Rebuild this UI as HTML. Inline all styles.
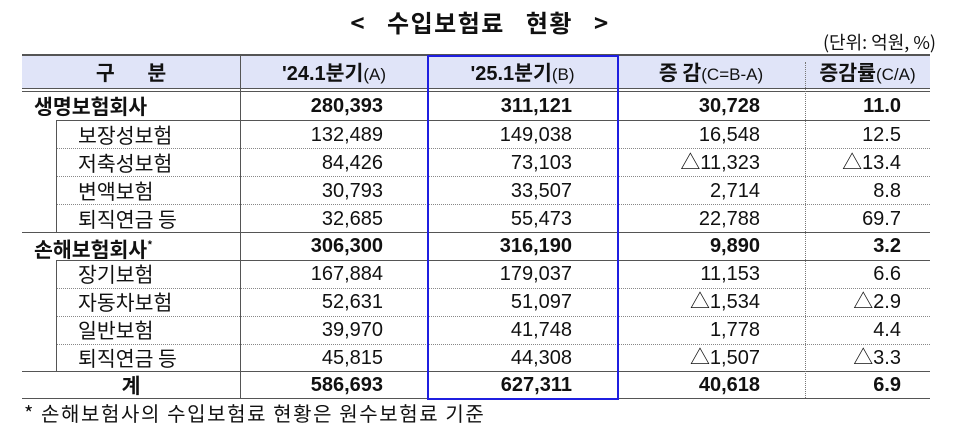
<!DOCTYPE html><html><head><meta charset="utf-8"><style>
body{margin:0;width:960px;height:437px;background:#fff;position:relative;overflow:hidden;font-family:"Liberation Sans","Noto Sans CJK KR",sans-serif;color:#111}
.a{position:absolute}
.t{position:absolute;font-size:20px;line-height:28px;white-space:nowrap}
.k{font-family:"Noto Sans CJK KR",sans-serif;font-size:20.5px;line-height:28px}
.b{font-weight:bold}
.r{text-align:right}
.h{position:absolute;height:0}
.v{position:absolute;width:0}
small{font-size:17px;font-weight:normal;font-family:"Liberation Sans",sans-serif}
</style></head><body>
<div class="a b" style="left:0;width:960px;top:5px;text-align:center;font-size:24px;line-height:34px;letter-spacing:1.5px;word-spacing:14px;font-family:'Noto Sans CJK KR',sans-serif">&lt; 수입보험료 현황 &gt;</div>
<div class="a" style="right:24px;top:29px;font-size:18px;line-height:26px;font-family:'Noto Sans CJK KR',sans-serif">(단위: 억원, %)</div>
<div class="a" style="left:22px;top:56px;width:908px;height:33px;background:#e0e4f8"></div>
<div class="h" style="left:22px;top:54px;width:908px;border-top:2px solid #555"></div>
<div class="h" style="left:22px;top:88px;width:908px;border-top:1px solid #555"></div>
<div class="h" style="left:22px;top:91px;width:908px;border-top:1px solid #555"></div>
<div class="h" style="left:56px;top:120px;width:874px;border-top:1px solid #555"></div>
<div class="h" style="left:56px;top:148px;width:874px;border-top:1px dotted #888"></div>
<div class="h" style="left:56px;top:176px;width:874px;border-top:1px dotted #888"></div>
<div class="h" style="left:56px;top:204px;width:874px;border-top:1px dotted #888"></div>
<div class="h" style="left:22px;top:232px;width:908px;border-top:1px solid #555"></div>
<div class="h" style="left:56px;top:260px;width:874px;border-top:1px solid #555"></div>
<div class="h" style="left:56px;top:288px;width:874px;border-top:1px dotted #888"></div>
<div class="h" style="left:56px;top:316px;width:874px;border-top:1px dotted #888"></div>
<div class="h" style="left:56px;top:344px;width:874px;border-top:1px dotted #888"></div>
<div class="h" style="left:22px;top:371px;width:908px;border-top:1px solid #555"></div>
<div class="h" style="left:22px;top:398px;width:908px;border-top:1px solid #555"></div>
<div class="v" style="left:56px;top:120px;height:112px;border-left:1px solid #555"></div>
<div class="v" style="left:56px;top:260px;height:111px;border-left:1px solid #555"></div>
<div class="v" style="left:240px;top:55px;height:343px;border-left:1px solid #555"></div>
<div class="v" style="left:617px;top:55px;height:343px;border-left:1px solid #555"></div>
<div class="v" style="left:805px;top:62px;height:336px;border-left:1px dotted #777"></div>
<div class="a" style="left:427px;top:55px;width:188px;height:341px;border:2px solid #1f1fe0"></div>
<div class="t k b" style="left:22px;width:218px;top:57px;text-align:center;letter-spacing:14px;text-indent:14px">구 분</div>
<div class="t b" style="left:240px;width:188px;top:57px;text-align:center">'24.1<span class="k">분기</span><small>(A)</small></div>
<div class="t b" style="left:428px;width:189px;top:57px;text-align:center">'25.1<span class="k">분기</span><small>(B)</small></div>
<div class="t b" style="left:617px;width:188px;top:57px;text-align:center"><span class="k">증 감</span><small>(C=B-A)</small></div>
<div class="t b" style="left:805px;width:125px;top:57px;text-align:center"><span class="k">증감률</span><small>(C/A)</small></div>
<div class="t k b" style="left:34px;top:91px">생명보험회사</div>
<div class="t k" style="left:78px;top:120px">보장성보험</div>
<div class="t k" style="left:78px;top:148px">저축성보험</div>
<div class="t k" style="left:78px;top:176px">변액보험</div>
<div class="t k" style="left:78px;top:204px">퇴직연금 등</div>
<div class="t k b" style="left:34px;top:231px">손해보험회사<sup style="font-size:11px">*</sup></div>
<div class="t k" style="left:78px;top:259px">장기보험</div>
<div class="t k" style="left:78px;top:287px">자동차보험</div>
<div class="t k" style="left:78px;top:315px">일반보험</div>
<div class="t k" style="left:78px;top:343px">퇴직연금 등</div>
<div class="t k b" style="left:22px;width:218px;top:370px;text-align:center">계</div>

<div class="t r b" style="right:577px;top:92px">280,393</div>
<div class="t r" style="right:577px;top:121px">132,489<br>84,426<br>30,793<br>32,685</div>
<div class="t r b" style="right:577px;top:232px">306,300</div>
<div class="t r" style="right:577px;top:260px">167,884<br>52,631<br>39,970<br>45,815</div>
<div class="t r b" style="right:577px;top:371px">586,693</div>

<div class="t r b" style="right:388px;top:92px">311,121</div>
<div class="t r" style="right:388px;top:121px">149,038<br>73,103<br>33,507<br>55,473</div>
<div class="t r b" style="right:388px;top:232px">316,190</div>
<div class="t r" style="right:388px;top:260px">179,037<br>51,097<br>41,748<br>44,308</div>
<div class="t r b" style="right:388px;top:371px">627,311</div>

<div class="t r b" style="right:200px;top:92px">30,728</div>
<div class="t r" style="right:200px;top:121px">16,548<br>△11,323<br>2,714<br>22,788</div>
<div class="t r b" style="right:200px;top:232px">9,890</div>
<div class="t r" style="right:200px;top:260px">11,153<br>△1,534<br>1,778<br>△1,507</div>
<div class="t r b" style="right:200px;top:371px">40,618</div>

<div class="t r b" style="right:59px;top:92px">11.0</div>
<div class="t r" style="right:59px;top:121px">12.5<br>△13.4<br>8.8<br>69.7</div>
<div class="t r b" style="right:59px;top:232px">3.2</div>
<div class="t r" style="right:59px;top:260px">6.6<br>△2.9<br>4.4<br>△3.3</div>
<div class="t r b" style="right:59px;top:371px">6.9</div>

<div class="a" style="left:24px;top:399px;font-size:20px;line-height:28px;letter-spacing:1.6px;font-family:'Noto Sans CJK KR',sans-serif">* 손해보험사의 수입보험료 현황은 원수보험료 기준</div>
</body></html>
